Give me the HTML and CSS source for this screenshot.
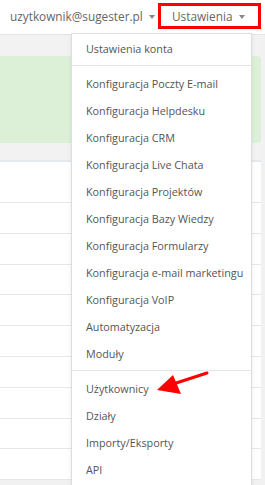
FILE: index.html
```html
<!DOCTYPE html>
<html lang="pl">

    <head>
        <meta charset="UTF-8">
        <meta name="viewport" content="width=device-width, initial-scale=1.0">
        <title>Ustawienia</title>
        <link rel="stylesheet" href="styles.css">
    </head>

    <body>
        <div class="topBar">
            <div class="navItem user">uzytkownik@sugester.pl <span class="caret"></span></div>
            <div class="navItem settings">Ustawienia <span class="caret"></span></div>
        </div>

        <div class="page">
            <div class="content">
                <div class="toolbar"></div>
                <div class="notice"></div>
                <div class="toolbar small"></div>
                <div class="table">
                    <div class="row head"></div>
                    <div class="row"></div>
                    <div class="row"></div>
                    <div class="row"></div>
                    <div class="row"></div>
                    <div class="row"></div>
                    <div class="row"></div>
                    <div class="row"></div>
                    <div class="row"></div>
                    <div class="row"></div>
                </div>
            </div>
        </div>

        <ul class="dropMenu">
            <li>Ustawienia konta</li>
            <li class="divider"></li>
            <li>Konfiguracja Poczty E-mail</li>
            <li>Konfiguracja Helpdesku</li>
            <li>Konfiguracja CRM</li>
            <li>Konfiguracja Live Chata</li>
            <li>Konfiguracja Projektów</li>
            <li>Konfiguracja Bazy Wiedzy</li>
            <li>Konfiguracja Formularzy</li>
            <li>Konfiguracja e-mail marketingu</li>
            <li>Konfiguracja VoIP</li>
            <li>Automatyzacja</li>
            <li>Moduły</li>
            <li class="divider"></li>
            <li>Użytkownicy</li>
            <li>Działy</li>
            <li>Importy/Eksporty</li>
            <li>API</li>
        </ul>

        <svg class="pointer" width="60" height="30" viewBox="0 0 60 30">
            <line x1="57" y1="3" x2="20" y2="15" stroke="#f00" stroke-width="3" stroke-linecap="round" />
            <polygon points="7,20 23,5 31,24" fill="#f00" />
        </svg>
    </body>

</html>
```

FILE: styles.css
```css
* {
    box-sizing: border-box;
    padding: 0;
    margin: 0;
}

body {
    width: 265px;
    height: 485px;
    overflow: hidden;
    font-family: "Open Sans", "Liberation Sans", sans-serif;
    font-size: 11.8px;
    color: #666;
    background-color: #f1f1f1;
    position: relative;
}

.topBar {
    height: 35px;
    background-color: #fff;
    border-bottom: 1px solid #e3e3e3;
    display: flex;
    align-items: flex-start;
    padding-top: 3px;
    padding-left: 10px;
}

.navItem {
    height: 26px;
    display: flex;
    align-items: center;
    gap: 6px;
    white-space: nowrap;
    flex-shrink: 0;
}

.user {
    width: 148px;
}

.settings {
    border: 3px solid #ff0000;
    width: 103px;
    padding-left: 11px;
}

.caret {
    display: inline-block;
    width: 0;
    height: 0;
    border-left: 3.5px solid transparent;
    border-right: 3.5px solid transparent;
    border-top: 4px solid #888;
    margin-top: 2px;
}

.page {
    height: 450px;
}

.content {
    width: 261px;
}

.toolbar {
    height: 21px;
    background-color: #f2f2f2;
}

.toolbar.small {
    height: 19px;
    border-bottom: 2px solid #e4e9ee;
}

.notice {
    height: 87px;
    background-color: #dcf0d8;
    border-radius: 0 4px 4px 0;
}

.table {
    background-color: #fff;
}

.row {
    height: 30.8px;
    border-bottom: 1px solid #e6e6e6;
}

.row.head {
    height: 41px;
}

.dropMenu {
    list-style: none;
    position: absolute;
    top: 33px;
    left: 71px;
    width: 181px;
    height: 460px;
    background-color: #fff;
    border: 1px solid #dedede;
    box-shadow: 0 2px 4px rgba(0, 0, 0, 0.08);
    padding-top: 1px;
    font-size: 10.8px;
    color: #555;
}

.dropMenu li {
    height: 27px;
    line-height: 27px;
    padding-left: 14px;
    white-space: nowrap;
}

.dropMenu li.divider {
    height: 1px;
    margin: 3px 0 4px;
    background-color: #e5e5e5;
}

.pointer {
    position: absolute;
    left: 150px;
    top: 370px;
}
```
